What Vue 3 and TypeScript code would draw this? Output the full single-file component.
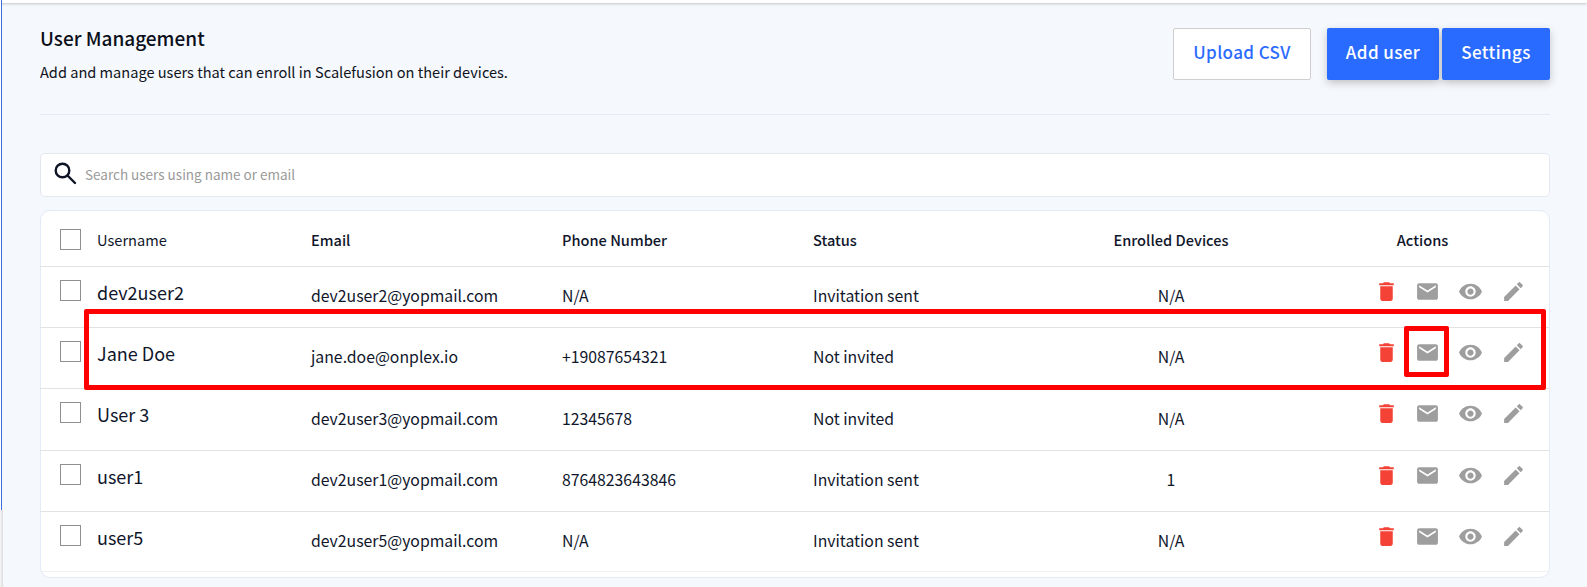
<script setup lang="ts">
interface UserRow {
  name: string
  email: string
  phone: string
  status: string
  devices: string
}

const users: UserRow[] = [
  { name: 'dev2user2', email: 'dev2user2@yopmail.com', phone: 'N/A', status: 'Invitation sent', devices: 'N/A' },
  { name: 'Jane Doe', email: 'jane.doe@onplex.io', phone: '+19087654321', status: 'Not invited', devices: 'N/A' },
  { name: 'User 3', email: 'dev2user3@yopmail.com', phone: '12345678', status: 'Not invited', devices: 'N/A' },
  { name: 'user1', email: 'dev2user1@yopmail.com', phone: '8764823643846', status: 'Invitation sent', devices: '1' },
  { name: 'user5', email: 'dev2user5@yopmail.com', phone: 'N/A', status: 'Invitation sent', devices: 'N/A' },
]
</script>

<template>
  <div class="page">
    <div class="topbar"></div>
    <div class="edge"></div>
    <div class="edge-low"></div>
    <main class="content">
      <header class="head">
        <div>
          <h1 class="title">User Management</h1>
          <p class="sub">Add and manage users that can enroll in Scalefusion on their devices.</p>
        </div>
        <div class="btns">
          <button class="btn outline">Upload CSV</button>
          <button class="btn primary add">Add user</button>
          <button class="btn primary set">Settings</button>
        </div>
      </header>
      <hr class="rule" />
      <div class="search">
        <svg class="lens" viewBox="0 0 26 26" width="26" height="26" fill="none" stroke="#0f1526" stroke-width="2.4">
          <circle cx="8.5" cy="8.5" r="6.8" />
          <path d="M13.5 13.5 L21 21" stroke-linecap="round" />
        </svg>
        <span class="placeholder">Search users using name or email</span>
      </div>
      <section class="card">
        <div class="grid hrow">
          <span class="box"></span>
          <span class="th-name">Username</span>
          <span class="th">Email</span>
          <span class="th">Phone Number</span>
          <span class="th">Status</span>
          <span class="th center">Enrolled Devices</span>
          <span class="th center actions-head">Actions</span>
        </div>
        <div v-for="u in users" :key="u.email" class="grid row">
          <span class="box"></span>
          <span class="name">{{ u.name }}</span>
          <span class="cell">{{ u.email }}</span>
          <span class="cell">{{ u.phone }}</span>
          <span class="cell">{{ u.status }}</span>
          <span class="cell center">{{ u.devices }}</span>
          <span class="acts">
            <svg class="ic trash" viewBox="0 0 24 24" fill="#f44336"><path d="M6 19c0 1.1.9 2 2 2h8c1.1 0 2-.9 2-2V7H6v12zM19 4h-3.5l-1-1h-5l-1 1H5v2h14V4z" /></svg>
            <svg class="ic" viewBox="0 0 24 24" fill="#9e9e9e"><path d="M20 4H4c-1.1 0-1.99.9-1.99 2L2 18c0 1.1.9 2 2 2h16c1.1 0 2-.9 2-2V6c0-1.1-.9-2-2-2zm0 4l-8 5-8-5V6l8 5 8-5v2z" /></svg>
            <svg class="ic" viewBox="0 0 24 24" fill="#9e9e9e"><path d="M12 4.5C7 4.5 2.73 7.61 1 12c1.73 4.39 6 7.5 11 7.5s9.27-3.11 11-7.5c-1.73-4.39-6-7.5-11-7.5zM12 17c-2.76 0-5-2.24-5-5s2.24-5 5-5 5 2.24 5 5-2.24 5-5 5zm0-8c-1.66 0-3 1.34-3 3s1.34 3 3 3 3-1.34 3-3-1.34-3-3-3z" /></svg>
            <svg class="ic" viewBox="0 0 24 24" fill="#9e9e9e"><path d="M3 17.25V21h3.75L17.81 9.94l-3.75-3.75L3 17.25zM20.71 7.04c.39-.39.39-1.02 0-1.41l-2.34-2.34c-.39-.39-1.02-.39-1.41 0l-1.83 1.83 3.75 3.75 1.83-1.83z" /></svg>
          </span>
        </div>
      </section>
    </main>
    <div class="mark big"></div>
    <div class="mark small"></div>
  </div>
</template>

<style>
html, body { margin: 0; overflow: hidden; background: #f5f8fc; }
</style>

<style scoped>
.page {
  position: relative;
  width: 1587px;
  height: 587px;
  overflow: hidden;
  background: #f5f8fc;
  color: #10162b;
  font-family: "Noto Sans CJK JP", "Noto Sans", sans-serif;
}
.topbar {
  position: absolute;
  inset: 0 0 auto 0;
  height: 3px;
  background: #fff;
  box-shadow: 0 1px 3px rgba(0, 0, 0, .22);
}
.edge {
  position: absolute;
  left: 0;
  top: 0;
  width: 2px;
  height: 510px;
  background: linear-gradient(90deg, #fff 50%, #3b6ce0 50%);
}
.edge-low {
  position: absolute;
  left: 0;
  top: 510px;
  width: 3px;
  height: 77px;
  background: linear-gradient(90deg, #f6f6f6, #dcdcdc);
}
.content { padding: 0 37px 0 40px; }
.head {
  display: flex;
  justify-content: space-between;
  height: 114px;
  box-sizing: border-box;
  padding-top: 27px;
}
.title {
  margin: 0;
  font-size: 19px;
  line-height: 22px;
  font-weight: 500;
  color: #0b0f1a;
}
.sub {
  margin: 13px 0 0;
  font-size: 14.58px;
  line-height: 20px;
  font-weight: 400;
  color: #10131c;
}
.btns { display: flex; align-items: flex-start; margin-top: 1px; }
.btn {
  height: 52px;
  padding: 0 0 5px;
  border-radius: 2px;
  font: 500 17px/1 "Noto Sans CJK JP", "Noto Sans", sans-serif;
  letter-spacing: .4px;
  cursor: pointer;
}
.outline {
  width: 138px;
  background: #fff;
  color: #2b6bff;
  border: 1px solid #cfcfcf;
  margin-right: 16px;
}
.primary {
  background: #2a6bff;
  color: #fff;
  border: 0;
  box-shadow: 0 3px 8px rgba(0, 0, 0, .22);
}
.add { width: 112px; margin-right: 3px; }
.set { width: 108px; }
.rule {
  margin: 0;
  border: 0;
  border-top: 1px solid #e3ebf8;
}
.search {
  margin-top: 38px;
  height: 44px;
  box-sizing: border-box;
  display: flex;
  align-items: center;
  background: #fff;
  border: 1px solid #e3e8f0;
  border-radius: 5px;
  padding-left: 13px;
}
.lens { flex: none; }
.placeholder {
  margin: 0 0 2px 5px;
  font-size: 13.5px;
  color: #9a9a9a;
}
.card {
  margin-top: 13px;
  height: 368px;
  box-sizing: border-box;
  background: #fff;
  border: 1px solid #e3ebf8;
  border-radius: 10px;
}
.grid {
  display: grid;
  grid-template-columns: 57px 214px 251px 251px 234px 248px 252px;
  margin-left: -1px;
  align-items: start;
}
.hrow { height: 55px; }
.row {
  height: 61.2px;
  border-top: 1px solid #e2e2e2;
  box-sizing: border-box;
}
.row:last-child { border-bottom: 1px solid #f0f0f0; }
.box {
  display: block;
  width: 21px;
  height: 21px;
  margin-left: 20px;
  box-sizing: border-box;
  background: #fff;
  border: 1px solid #8f8f8f;
}
.hrow .box { margin-top: 18px; }
.row .box { margin-top: 13px; }
.th, .th-name {
  padding-top: 18px;
  font-size: 14.6px;
  line-height: 22px;
  font-weight: 500;
  color: #10162b;
}
.th-name { font-weight: 400; }
.center { text-align: center; }
.actions-head { padding-left: 3px; }
.name {
  padding-top: 12px;
  font-size: 18px;
  line-height: 26px;
  color: #10162b;
}
.cell {
  padding-top: 18.3px;
  font-size: 15.8px;
  line-height: 22px;
  color: #10162b;
}
.acts {
  display: flex;
  gap: 18px;
  padding: 12px 0 0 79px;
}
.ic { width: 25px; height: 25px; flex: none; }
.trash { margin-right: -2px; }
.mark {
  position: absolute;
  box-sizing: border-box;
  border: 5px solid #f00;
  border-radius: 2px;
  pointer-events: none;
}
.big { left: 84px; top: 309px; width: 1462px; height: 81px; }
.small { left: 1404px; top: 326px; width: 45px; height: 51px; }
</style>
